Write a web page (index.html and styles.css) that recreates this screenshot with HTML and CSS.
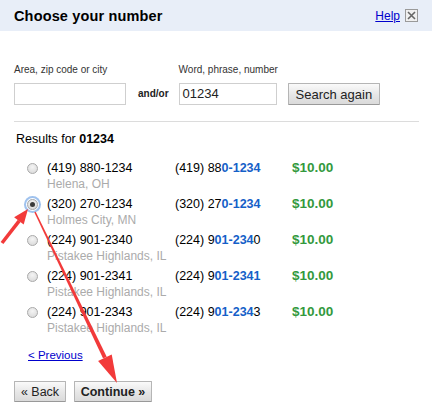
FILE: index.html
```html
<!DOCTYPE html>
<html>
<head>
<meta charset="utf-8">
<link rel="stylesheet" href="styles.css">
</head>
<body>
<div class="dialog">
  <div class="header">
    <h1 class="title">Choose your number</h1>
    <div class="header-tools">
      <a class="help" href="#">Help</a>
      <span class="close"><svg width="11" height="11" viewBox="0 0 11 11"><path d="M2 2 L9 9 M9 2 L2 9" stroke="#666" stroke-width="1.6"/></svg></span>
    </div>
  </div>
  <div class="body">
    <div class="search">
      <div class="field">
        <label class="label">Area, zip code or city</label>
        <div class="input input-area"></div>
      </div>
      <span class="andor">and/or</span>
      <div class="field">
        <label class="label">Word, phrase, number</label>
        <div class="input input-word">01234</div>
      </div>
      <button class="btn btn-search">Search again</button>
    </div>
    <div class="rule"></div>
    <div class="results-for">Results for <b>01234</b></div>
    <ul class="results">
      <li class="result">
        <span class="radio"></span>
        <div class="num-col"><div class="num">(419) 880-1234</div><div class="loc">Helena, OH</div></div>
        <div class="vanity">(419) 88<b>0-1234</b></div>
        <div class="price">$10.00</div>
      </li>
      <li class="result">
        <span class="radio checked"></span>
        <div class="num-col"><div class="num">(320) 270-1234</div><div class="loc">Holmes City, MN</div></div>
        <div class="vanity">(320) 27<b>0-1234</b></div>
        <div class="price">$10.00</div>
      </li>
      <li class="result">
        <span class="radio"></span>
        <div class="num-col"><div class="num">(224) 901-2340</div><div class="loc">Pistakee Highlands, IL</div></div>
        <div class="vanity">(224) 9<b>01-234</b>0</div>
        <div class="price">$10.00</div>
      </li>
      <li class="result">
        <span class="radio"></span>
        <div class="num-col"><div class="num">(224) 901-2341</div><div class="loc">Pistakee Highlands, IL</div></div>
        <div class="vanity">(224) 9<b>01-2341</b></div>
        <div class="price">$10.00</div>
      </li>
      <li class="result">
        <span class="radio"></span>
        <div class="num-col"><div class="num">(224) 901-2343</div><div class="loc">Pistakee Highlands, IL</div></div>
        <div class="vanity">(224) 9<b>01-234</b>3</div>
        <div class="price">$10.00</div>
      </li>
    </ul>
    <a class="prev" href="#">&lt; Previous</a>
    <div class="actions">
      <button class="btn btn-back">« Back</button>
      <button class="btn btn-continue">Continue »</button>
    </div>
  </div>
  <svg class="annot" width="432" height="414" viewBox="0 0 432 414">
    <polygon fill="#f23a3a" points="0.6,241.9 3.4,244.1 20.6,221.9 17.8,219.7"/>
    <polygon fill="#f23a3a" points="28,209 23.7,224.5 14.1,217.3"/>
    <polygon fill="#f23a3a" points="35.7,211.7 34.3,212.3 103.1,358.6 106.7,356.8"/>
    <polygon fill="#f23a3a" points="117,383 111.7,354.5 98.1,360.9"/>
  </svg>
</div>
</body>
</html>
```

FILE: styles.css
```css
* { box-sizing: border-box; }
html, body { margin: 0; padding: 0; background: #fff; }
body { font-family: Arial, "Liberation Sans", sans-serif; color: #000; }

.dialog { position: relative; width: 432px; height: 414px; overflow: hidden; }

.header {
  height: 31px;
  background: #e8eef8;
  display: flex;
  align-items: center;
  justify-content: space-between;
  padding: 0 14px 0 14px;
}
.title { margin: 0; font-size: 14.5px; font-weight: bold; letter-spacing: 0.15px; }
.header-tools { display: flex; align-items: center; gap: 5px; }
.help { font-size: 12px; color: #0000cc; text-decoration: underline; }
.close {
  width: 13px; height: 13px;
  border: 1px solid #9a9a9a;
  background: #f0f0f0;
  display: flex; align-items: center; justify-content: center;
}

.body { padding: 33px 13px 0 14px; }

.search { display: flex; align-items: flex-end; }
.field { display: flex; flex-direction: column; gap: 7px; }
.label { font-size: 10px; line-height: 12px; color: #333; }
.input {
  height: 22px;
  border: 1px solid #cfcfcf;
  font-size: 13px;
  line-height: 20px;
  padding: 0 3px;
  color: #222;
}
.input-area { width: 112px; }
.input-word { width: 98px; }
.andor { font-size: 10px; font-weight: bold; line-height: 22px; margin: 0 10px 0 12px; color: #222; }

.btn {
  font-family: Arial, "Liberation Sans", sans-serif;
  height: 21px;
  border: 1px solid #b5b5b5;
  border-bottom-color: #999;
  background: linear-gradient(#fafafa, #e6e6e6 55%, #dadada);
  color: #222;
  font-size: 12.5px;
  padding: 0;
  border-radius: 1px;
}
.btn-search { width: 92px; height: 22px; margin-left: 10px; font-size: 13px; }

.rule { height: 1px; background: #dcdcdc; margin-top: 16px; }

.results-for { font-size: 12.5px; line-height: 16px; margin: 9px 0 0 2px; }

.results { list-style: none; margin: 12px 0 0; padding: 0; }
.result {
  display: grid;
  grid-template-columns: 13px 20px 128px 117px auto;
  height: 36px;
}
.radio { grid-column: 2; }
.radio {
  width: 11px; height: 11px;
  margin-top: 4px;
  border-radius: 50%;
  border: 1px solid #a9a9a9;
  background: radial-gradient(circle at 50% 35%, #f4f4f4, #d6d6d6);
  position: relative;
}
.radio.checked {
  box-shadow: 0 0 0 1px #fff, 0 0 0 3px #9fc2ee;
}
.radio.checked::after {
  content: "";
  position: absolute;
  left: 2px; top: 2px;
  width: 5px; height: 5px;
  border-radius: 50%;
  background: #3a3a3a;
}
.num { font-size: 12.5px; line-height: 18px; }
.loc { font-size: 12px; line-height: 14px; color: #ababab; }
.vanity { font-size: 12.5px; line-height: 18px; }
.vanity b { color: #1560c8; }
.price { font-size: 13.5px; line-height: 18px; font-weight: bold; color: #33993d; }

.prev {
  display: inline-block;
  margin: 9px 0 0 14px;
  font-size: 11.5px;
  line-height: 14px;
  color: #0000cc;
  text-decoration: underline;
}

.actions { display: flex; gap: 8px; margin-top: 18px; }
.btn-back { width: 52px; }
.btn-continue { width: 78px; font-weight: bold; }

.annot { position: absolute; left: 0; top: 0; pointer-events: none; }
```
